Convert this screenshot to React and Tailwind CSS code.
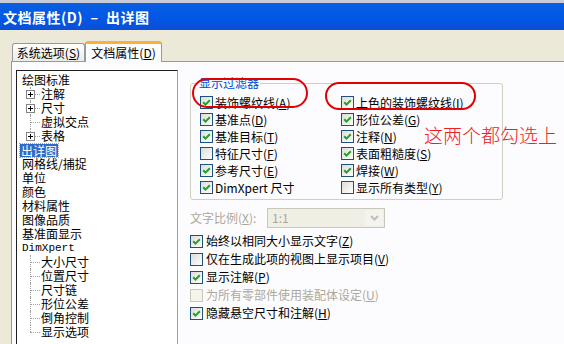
import React from "react";

function Acc({ text, k, colon }) {
  return (
    <span className="whitespace-nowrap">
      {text}(<u className="underline-offset-1">{k}</u>){colon ? ":" : ""}
    </span>
  );
}

function Box({ checked, disabled }) {
  return (
    <span
      className={
        disabled
          ? "w-[13px] h-[13px] border border-[#CAC8BB] bg-[#F5F4EA] flex items-center justify-center shrink-0"
          : "w-[13px] h-[13px] border border-[#1C5180] bg-gradient-to-br from-[#DCDCD7] to-white flex items-center justify-center shrink-0"
      }
    >
      {checked && (
        <svg width="9" height="9" viewBox="0 0 9 9">
          <path d="M1.2 4.2 L3.5 6.6 L7.8 2.2" stroke="#21A121" strokeWidth="2" fill="none" />
        </svg>
      )}
    </span>
  );
}

function Check({ checked, disabled, children, gap }) {
  return (
    <div className={gap ? "flex items-center gap-[3px] h-[18px]" : "flex items-center gap-[2px] h-[17px]"}>
      <Box checked={checked} disabled={disabled} />
      <span className={disabled ? "text-[#ACA899] leading-[14px]" : "text-black leading-[14px]"}>{children}</span>
    </div>
  );
}

function Conn({ plus, last }) {
  return (
    <span className="relative w-[19px] h-[14px] shrink-0">
      <span
        className={
          last
            ? "absolute left-[8px] top-0 h-[7px] border-l border-dotted border-[#A0A0A0]"
            : "absolute left-[8px] top-0 h-[14px] border-l border-dotted border-[#A0A0A0]"
        }
      />
      <span className="absolute left-[8px] top-[7px] w-[10px] border-t border-dotted border-[#A0A0A0]" />
      {plus && (
        <span className="absolute left-[4px] top-[3px] w-[9px] h-[9px] border border-[#848484] bg-white flex items-center justify-center">
          <svg width="7" height="7" viewBox="0 0 7 7">
            <path d="M1 3.5 H6 M3.5 1 V6" stroke="#000" strokeWidth="1" />
          </svg>
        </span>
      )}
    </span>
  );
}

function Row({ children }) {
  return <div className="h-[14px] leading-[14px] flex items-center whitespace-nowrap">{children}</div>;
}

export default function App() {
  const font = "font-['Noto_Sans_CJK_SC','Noto_Sans',sans-serif]";
  return (
    <div className={`w-[564px] h-[344px] overflow-hidden bg-[#ECE9D8] flex flex-col text-[12px] ${font}`}>
      <div className="h-[3px] bg-[#C8CCD8] shrink-0" />
      <div className="h-[27px] shrink-0 bg-gradient-to-b from-[#0A5DE0] via-[#0058E6] to-[#0B4FD6] flex items-center px-[3px]">
        <span className="text-white font-bold text-[14px] leading-[16px] whitespace-pre tracking-[0.5px]">
          文档属性(D)  –  出详图
        </span>
      </div>
      <div className="h-[31px] shrink-0 flex items-end pl-[12px] relative z-10">
        <div className="w-[73px] h-[18px] border border-b-0 border-[#919B9C] rounded-t-[3px] bg-gradient-to-b from-white to-[#ECEBE6] flex items-center justify-center leading-[14px]">
          <Acc text="系统选项" k="S" />
        </div>
        <div className="w-[77px] h-[21px] -mb-px bg-[#FCFCFE] border-x border-[#919B9C] rounded-t-[3px] border-t-[3px] border-t-[#F8B23A] flex items-center justify-center leading-[14px]">
          <Acc text="文档属性" k="D" />
        </div>
      </div>
      <div className="flex-1 ml-[11px] border-l border-t border-[#919B9C] bg-[#FCFCFE] flex pt-[8px] pl-[4px] overflow-hidden">
        <div className="w-[162px] h-[290px] shrink-0 border border-[#1E1E1E] border-r-[#A0A0A0] bg-white pt-[2px] pl-[5px] text-black">
          <Row>绘图标准</Row>
          <Row><Conn plus />注解</Row>
          <Row><Conn plus />尺寸</Row>
          <Row><Conn />虚拟交点</Row>
          <Row><Conn plus last />表格</Row>
          <Row>
            <span className="-ml-[2px] px-[1px] bg-[#316AC5] text-white outline outline-1 outline-dotted outline-[#E0A040] leading-[13px]">出详图</span>
          </Row>
          <Row>网格线/捕捉</Row>
          <Row>单位</Row>
          <Row>颜色</Row>
          <Row>材料属性</Row>
          <Row>图像品质</Row>
          <Row>基准面显示</Row>
          <Row><span className="font-['Liberation_Mono',monospace] text-[11px]">DimXpert</span></Row>
          <Row><Conn />大小尺寸</Row>
          <Row><Conn />位置尺寸</Row>
          <Row><Conn />尺寸链</Row>
          <Row><Conn />形位公差</Row>
          <Row><Conn />倒角控制</Row>
          <Row><Conn last />显示选项</Row>
        </div>
        <div className="ml-[12px] flex flex-col">
          <div className="mt-[13px] w-[313px] h-[117px] border border-[#D0D0BF] rounded-[3px] relative pt-[10px] pl-[9px]">
            <span className="absolute left-[7px] -top-[8px] px-[1px] bg-[#FCFCFE] text-[#0046D5] leading-[14px]">显示过滤器</span>
            <div className="grid grid-cols-[141px_1fr]">
              <Check checked><Acc text="装饰螺纹线" k="A" /></Check>
              <Check checked><Acc text="上色的装饰螺纹线" k="I" /></Check>
              <Check checked><Acc text="基准点" k="D" /></Check>
              <Check checked><Acc text="形位公差" k="G" /></Check>
              <Check checked><Acc text="基准目标" k="T" /></Check>
              <Check checked><Acc text="注释" k="N" /></Check>
              <Check><Acc text="特征尺寸" k="F" /></Check>
              <Check checked><Acc text="表面粗糙度" k="S" /></Check>
              <Check checked><Acc text="参考尺寸" k="E" /></Check>
              <Check checked><Acc text="焊接" k="W" /></Check>
              <Check checked><span>DimXpert 尺寸</span></Check>
              <Check><Acc text="显示所有类型" k="Y" /></Check>
            </div>
          </div>
          <div className="mt-[8px] h-[20px] flex items-center">
            <span className="w-[77px] text-[#ACA899] leading-[14px]"><Acc text="文字比例" k="X" colon /></span>
            <div className="w-[118px] h-[20px] border border-[#C9C7BA] bg-[#F0EFE6] flex items-center">
              <span className="flex-1 pl-[4px] text-[#ACA899] leading-[14px]">1:1</span>
              <span className="w-[18px] h-[16px] mr-[1px] bg-[#F4F3EE] rounded-[2px] flex items-center justify-center">
                <svg width="9" height="6" viewBox="0 0 9 6">
                  <path d="M1 1 L4.5 4.5 L8 1" stroke="#C0BFB5" strokeWidth="2" fill="none" />
                </svg>
              </span>
            </div>
          </div>
          <div className="mt-[4px] flex flex-col">
            <Check gap checked><Acc text="始终以相同大小显示文字" k="Z" /></Check>
            <Check gap><Acc text="仅在生成此项的视图上显示项目" k="V" /></Check>
            <Check gap checked><Acc text="显示注解" k="P" /></Check>
            <Check gap disabled><Acc text="为所有零部件使用装配体设定" k="U" /></Check>
            <Check gap checked><Acc text="隐藏悬空尺寸和注解" k="H" /></Check>
          </div>
        </div>
      </div>
      <div className="absolute left-[192px] top-[78px] w-[116px] h-[30px] border-2 border-[#E00000] rounded-[15px] pointer-events-none" />
      <div className="absolute left-[325px] top-[82px] w-[151px] h-[28px] border-2 border-[#E00000] rounded-[14px] pointer-events-none" />
      <div className="absolute left-[424px] top-[125px] text-[19px] leading-[20px] text-[#F02020] whitespace-nowrap font-light">这两个都勾选上</div>
    </div>
  );
}
